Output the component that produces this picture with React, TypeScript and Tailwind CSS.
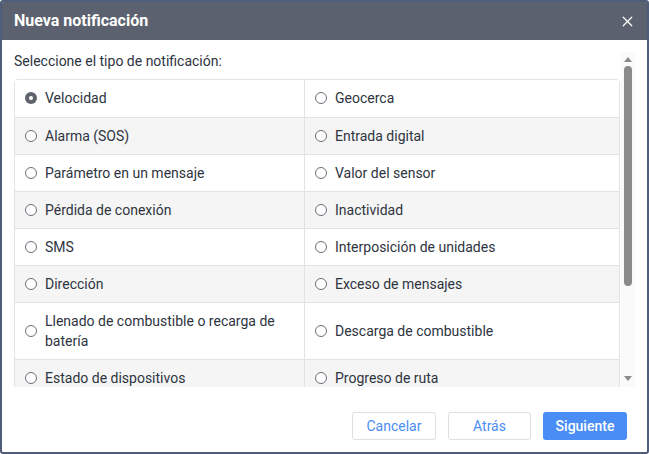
import { X } from 'lucide-react';

const left = [
  'Velocidad',
  'Alarma (SOS)',
  'Parámetro en un mensaje',
  'Pérdida de conexión',
  'SMS',
  'Dirección',
  'Llenado de combustible o recarga de batería',
  'Estado de dispositivos',
];

const right = [
  'Geocerca',
  'Entrada digital',
  'Valor del sensor',
  'Inactividad',
  'Interposición de unidades',
  'Exceso de mensajes',
  'Descarga de combustible',
  'Progreso de ruta',
];

function Radio({ checked }: { checked?: boolean }) {
  if (checked) {
    return (
      <span className="w-[12px] h-[12px] rounded-full bg-[#5f636b] flex items-center justify-center shrink-0">
        <span className="w-[4px] h-[4px] rounded-full bg-white" />
      </span>
    );
  }
  return <span className="w-[12px] h-[12px] rounded-full border border-[#6b6f77] bg-white shrink-0" />;
}

function Cell({ label, checked, border }: { label: string; checked?: boolean; border?: boolean }) {
  return (
    <div className={`flex items-center gap-[8px] pl-[10px] pr-3 pb-[1px] ${border ? 'border-r border-[#e2e2e2]' : ''}`}>
      <Radio checked={checked} />
      <span className="leading-[20px]">{label}</span>
    </div>
  );
}

export default function App() {
  return (
    <div
      className="w-[649px] h-[454px] border-2 border-[#4f5d79] rounded-[3px] bg-white flex flex-col overflow-hidden text-[#2e3440]"
      style={{ fontFamily: 'Roboto, "Liberation Sans", sans-serif' }}
    >
      {/* Header */}
      <div className="h-[38px] bg-[#5b616e] flex items-center justify-between pl-3 pr-[11px] shrink-0">
        <h1 className="text-white font-bold text-[16px]">Nueva notificación</h1>
        <X size={17} strokeWidth={1.75} className="text-white" />
      </div>

      {/* Body */}
      <div className="h-[347px] flex pl-3 pr-3 shrink-0">
        <div className="w-[606px] overflow-hidden">
          <p className="text-[14px] leading-[20px] pt-[11px] mb-[8px]">Seleccione el tipo de notificación:</p>
          <div className="border border-[#e2e2e2] rounded-t-[4px] text-[14px]">
            {left.map((l, i) => (
              <div
                key={l}
                className={`grid grid-cols-[290px_1fr] ${i % 2 ? 'bg-[#f5f5f5]' : 'bg-white'} ${
                  i > 0 ? 'border-t border-[#e2e2e2]' : ''
                } ${i === 6 ? 'h-[57px]' : 'h-[37px]'}`}
              >
                <Cell label={l} checked={i === 0} border />
                <Cell label={right[i]} />
              </div>
            ))}
          </div>
        </div>
        {/* Scrollbar */}
        <div className="w-[14px] ml-[1px] mt-[12px] bg-[#fafafa] flex flex-col items-center">
          <span className="mt-[5px] w-0 h-0 border-l-[4px] border-r-[4px] border-b-[5px] border-l-transparent border-r-transparent border-b-[#8a8a8a]" />
          <span className="mt-[4px] w-[8px] h-[220px] rounded-full bg-[#8a8a8a]" />
          <span className="mt-auto mb-[6px] w-0 h-0 border-l-[4px] border-r-[4px] border-t-[5px] border-l-transparent border-r-transparent border-t-[#8a8a8a]" />
        </div>
      </div>

      {/* Footer */}
      <div className="flex-1 flex items-start justify-end gap-3 pr-[20px] pt-[25px]">
        <button className="w-[84px] h-[28px] rounded-[3px] border border-[#dcdfe4] text-[#4a8ef5] text-[14px]">Cancelar</button>
        <button className="w-[83px] h-[28px] rounded-[3px] border border-[#dcdfe4] text-[#4a8ef5] text-[14px]">Atrás</button>
        <button className="w-[84px] h-[28px] rounded-[3px] bg-[#4a8ef5] text-white text-[14px] font-medium">Siguiente</button>
      </div>
    </div>
  );
}
